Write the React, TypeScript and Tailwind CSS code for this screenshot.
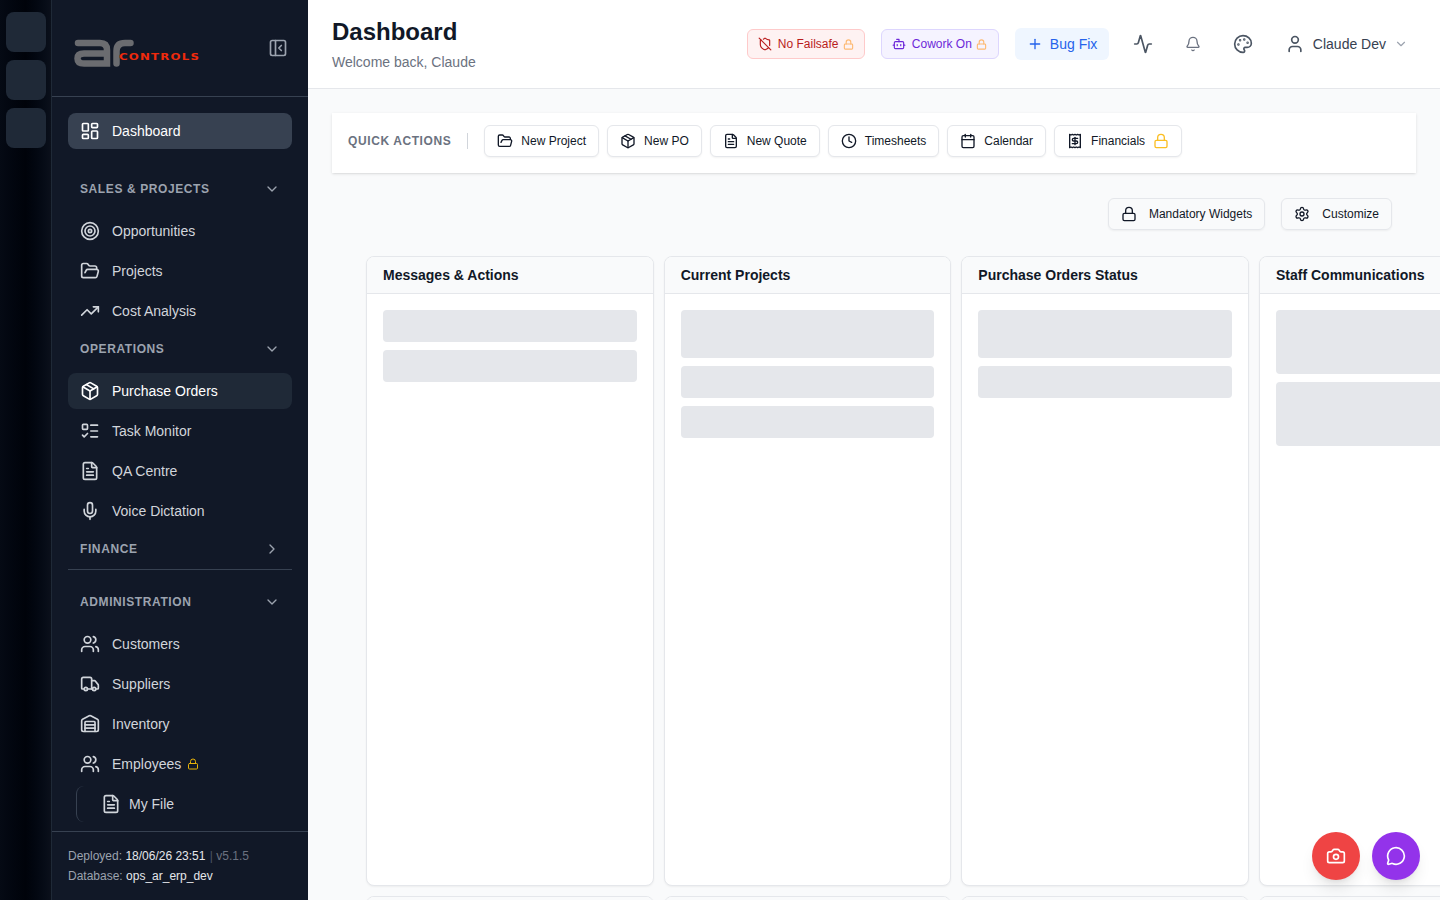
import React from "react";
import {
  LayoutDashboard, Target, FolderOpen, TrendingUp, Package, ListTodo, FileText, Mic, Users, Truck, Warehouse,
  PanelLeftClose, ChevronDown, ChevronRight, Lock, ShieldOff, Bot, Plus, Activity, Bell, Palette, User, Clock,
  Calendar, Receipt, Settings, Camera, MessageCircle,
} from "lucide-react";

function Item({ icon: Icon, label, cls = "text-[#d1d5db]", lock = false }: { icon: any; label: string; cls?: string; lock?: boolean }) {
  return (
    <div className={`h-9 mb-1 flex items-center gap-3 px-3 rounded-lg text-sm ${cls}`}>
      <Icon size={20} strokeWidth={2} className="shrink-0" />
      <span>{label}</span>
      {lock && <Lock size={12} className="text-[#eab308] -ml-1.5" />}
    </div>
  );
}

function Section({ label, open = true, cls = "mb-2" }: { label: string; open?: boolean; cls?: string }) {
  return (
    <div className={`h-8 flex items-center justify-between px-3 text-xs font-bold tracking-wider text-[#9ca3af] ${cls}`}>
      <span>{label}</span>
      {open ? <ChevronDown size={16} className="mr-0" /> : <ChevronRight size={16} />}
    </div>
  );
}

function Quick({ icon: Icon, label, lock = false }: { icon: any; label: string; lock?: boolean }) {
  return (
    <div className="h-8 flex items-center gap-2 px-3 bg-white border border-[#e5e7eb] rounded-md text-xs text-[#111827] shadow-xs">
      <Icon size={16} strokeWidth={2} />
      <span>{label}</span>
      {lock && <Lock size={16} className="text-[#fbbf24]" />}
    </div>
  );
}

function Widget({ title, bars }: { title: string; bars: string[] }) {
  return (
    <div className="h-[630px] bg-white border border-[#e5e7eb] rounded-lg overflow-hidden shadow-xs">
      <div className="h-[37px] px-4 flex items-center bg-[#f9fafb] border-b border-[#e5e7eb] text-sm font-bold text-[#111827] whitespace-nowrap">
        {title}
      </div>
      <div className="p-4 flex flex-col gap-2">
        {bars.map((b, i) => (
          <div key={i} className={`${b} bg-[#e5e7eb] rounded`} />
        ))}
      </div>
    </div>
  );
}

export default function App() {
  return (
    <div className="w-[1440px] h-[900px] overflow-hidden flex antialiased font-['Liberation_Sans',Arial,sans-serif] relative">
      {/* rail */}
      <div className="w-[52px] shrink-0 bg-gradient-to-r from-[#050a14] via-[#00030a] to-[#0b101b] border-r border-[#1f2937] pt-3 pl-1.5 flex flex-col gap-2">
        <div className="w-10 h-10 rounded-lg bg-[#1f2937]" />
        <div className="w-10 h-10 rounded-lg bg-[#1f2937]" />
        <div className="w-10 h-10 rounded-lg bg-[#1f2937]" />
      </div>

      {/* sidebar */}
      <aside className="w-64 shrink-0 bg-[#111827] flex flex-col h-full">
        <div className="h-[97px] shrink-0 border-b border-[#374151] flex items-center justify-between pl-[22px] pr-5">
          <div className="relative w-[126px] h-[28px] mt-[10px]">
            <svg width="60" height="28" viewBox="0 0 60 28" fill="none" stroke="#6b6c70" strokeWidth="6.5" strokeLinecap="round">
              <path d="M4 4 H26 Q33 4 33 11 V24.5 H10 Q3.5 24.5 3.5 19.5 Q3.5 14.5 10 14.5 H33" />
              <path d="M42.5 24.5 V12 Q42.5 4 51 4 H56.5" />
            </svg>
            <span className="absolute left-[45px] top-[13px] text-[10px] leading-[10px] font-bold tracking-[1px] text-[#f02a0c] font-['DejaVu_Sans',sans-serif] scale-x-[1.18] origin-left scale-y-[0.85]">
              CONTROLS
            </span>
          </div>
          <PanelLeftClose size={20} className="text-[#9ca3af]" />
        </div>

        <nav className="flex-1 px-4 pt-4 min-h-0 overflow-hidden">
          <Item icon={LayoutDashboard} label="Dashboard" cls="bg-[#374151] text-white" />
          <div className="h-5" />
          <Section label="SALES & PROJECTS" />
          <Item icon={Target} label="Opportunities" />
          <Item icon={FolderOpen} label="Projects" />
          <Item icon={TrendingUp} label="Cost Analysis" />
          <Section label="OPERATIONS" />
          <Item icon={Package} label="Purchase Orders" cls="bg-[#1f2937] text-white" />
          <Item icon={ListTodo} label="Task Monitor" />
          <Item icon={FileText} label="QA Centre" />
          <Item icon={Mic} label="Voice Dictation" />
          <Section label="FINANCE" open={false} cls="mb-1" />
          <div className="border-t border-[#374151] mb-4" />
          <Section label="ADMINISTRATION" />
          <Item icon={Users} label="Customers" />
          <Item icon={Truck} label="Suppliers" />
          <Item icon={Warehouse} label="Inventory" />
          <Item icon={Users} label="Employees" lock />
          <div className="ml-2 h-9 flex items-center gap-2 pl-[24px] border-l border-[#374151] rounded-l-lg text-sm text-[#d1d5db]">
            <FileText size={20} />
            <span>My File</span>
          </div>
        </nav>

        <div className="h-[69px] shrink-0 border-t border-[#374151] px-4 pt-[14px] text-xs leading-5 text-[#9ca3af]">
          <div className="whitespace-nowrap">
            Deployed: <span className="text-[#e5e7eb]">18/06/26 23:51</span> <span className="text-[#4b5563] ml-px">|</span>{" "}
            <span className="text-[#6b7280]">v5.1.5</span>
          </div>
          <div className="whitespace-nowrap">
            Database: <span className="text-[#e5e7eb]">ops_ar_erp_dev</span>
          </div>
        </div>
      </aside>

      {/* main */}
      <main className="flex-1 min-w-0 bg-[#f9fafb] flex flex-col overflow-hidden">
        <header className="h-[89px] shrink-0 bg-white border-b border-[#e5e7eb] flex items-center justify-between pl-6 pr-8">
          <div>
            <h1 className="text-2xl leading-8 font-bold text-[#111827]">Dashboard</h1>
            <p className="text-sm leading-5 mt-1 text-[#6b7280]">Welcome back, Claude</p>
          </div>
          <div className="flex items-center">
            <div className="w-[118px] h-[30px] flex items-center pl-[10px] gap-1.5 rounded-md border border-[#fecaca] bg-[#fef2f2] text-xs text-[#b91c1c]">
              <ShieldOff size={14} />
              <span>No Failsafe</span>
              <Lock size={11} strokeWidth={2.5} className="text-[#fdba74] -ml-[1.5px]" />
            </div>
            <div className="ml-4 w-[118px] h-[30px] flex items-center pl-[10px] gap-1.5 rounded-md border border-[#ddd6fe] bg-[#f5f3ff] text-xs text-[#6d28d9]">
              <Bot size={14} />
              <span>Cowork On</span>
              <Lock size={11} strokeWidth={2.5} className="text-[#fdba74] -ml-[1.5px]" />
            </div>
            <div className="ml-4 w-[94px] h-8 flex items-center pl-3 gap-[7px] rounded-md bg-[#eff6ff] text-sm text-[#2563eb]">
              <Plus size={16} />
              <span>Bug Fix</span>
            </div>
            <Activity size={20} className="ml-6 text-[#4b5563]" />
            <Bell size={16} className="ml-[32px] text-[#6b7280]" />
            <Palette size={20} className="ml-[32px] text-[#4b5563]" />
            <User size={20} className="ml-[32px] text-[#4b5563]" />
            <span className="ml-2 text-sm text-[#374151]">Claude Dev</span>
            <ChevronDown size={14} className="ml-2 text-[#9ca3af]" />
          </div>
        </header>

        <div className="pt-6 pl-6 flex flex-col min-h-0">
          <div className="w-[1084px] h-[60px] shrink-0 bg-white shadow-sm flex items-center px-4 pb-1">
            <span className="text-xs font-bold tracking-wider text-[#6b7280]">QUICK ACTIONS</span>
            <div className="w-px h-4 bg-[#d1d5db] ml-4 mr-4" />
            <div className="flex gap-2">
              <Quick icon={FolderOpen} label="New Project" />
              <Quick icon={Package} label="New PO" />
              <Quick icon={FileText} label="New Quote" />
              <Quick icon={Clock} label="Timesheets" />
              <Quick icon={Calendar} label="Calendar" />
              <Quick icon={Receipt} label="Financials" lock />
            </div>
          </div>

          <div className="w-[1060px] mt-[25px] flex justify-end gap-4 text-xs text-[#111827]">
            <div className="h-8 flex items-center gap-3 px-3 border border-[#e5e7eb] rounded-md shadow-xs">
              <Lock size={16} />
              <span>Mandatory Widgets</span>
            </div>
            <div className="h-8 flex items-center gap-3 px-3 border border-[#e5e7eb] rounded-md shadow-xs">
              <Settings size={16} />
              <span>Customize</span>
            </div>
          </div>

          <div className="mt-[26px] ml-[34px] grid grid-cols-[repeat(4,287.67px)] gap-x-[10px] gap-y-[10px] w-[1200px]">
            <Widget title="Messages & Actions" bars={["h-8", "h-8"]} />
            <Widget title="Current Projects" bars={["h-12", "h-8", "h-8"]} />
            <Widget title="Purchase Orders Status" bars={["h-12", "h-8"]} />
            <Widget title="Staff Communications" bars={["h-16", "h-16"]} />
            <Widget title="" bars={[]} />
            <Widget title="" bars={[]} />
            <Widget title="" bars={[]} />
            <Widget title="" bars={[]} />
          </div>
        </div>
      </main>

      <div className="absolute right-5 bottom-5 flex gap-3">
        <div className="w-12 h-12 rounded-full bg-[#ef4444] text-white flex items-center justify-center shadow-lg">
          <Camera size={20} />
        </div>
        <div className="w-12 h-12 rounded-full bg-[#9333ea] text-white flex items-center justify-center shadow-lg">
          <MessageCircle size={20} />
        </div>
      </div>
    </div>
  );
}
